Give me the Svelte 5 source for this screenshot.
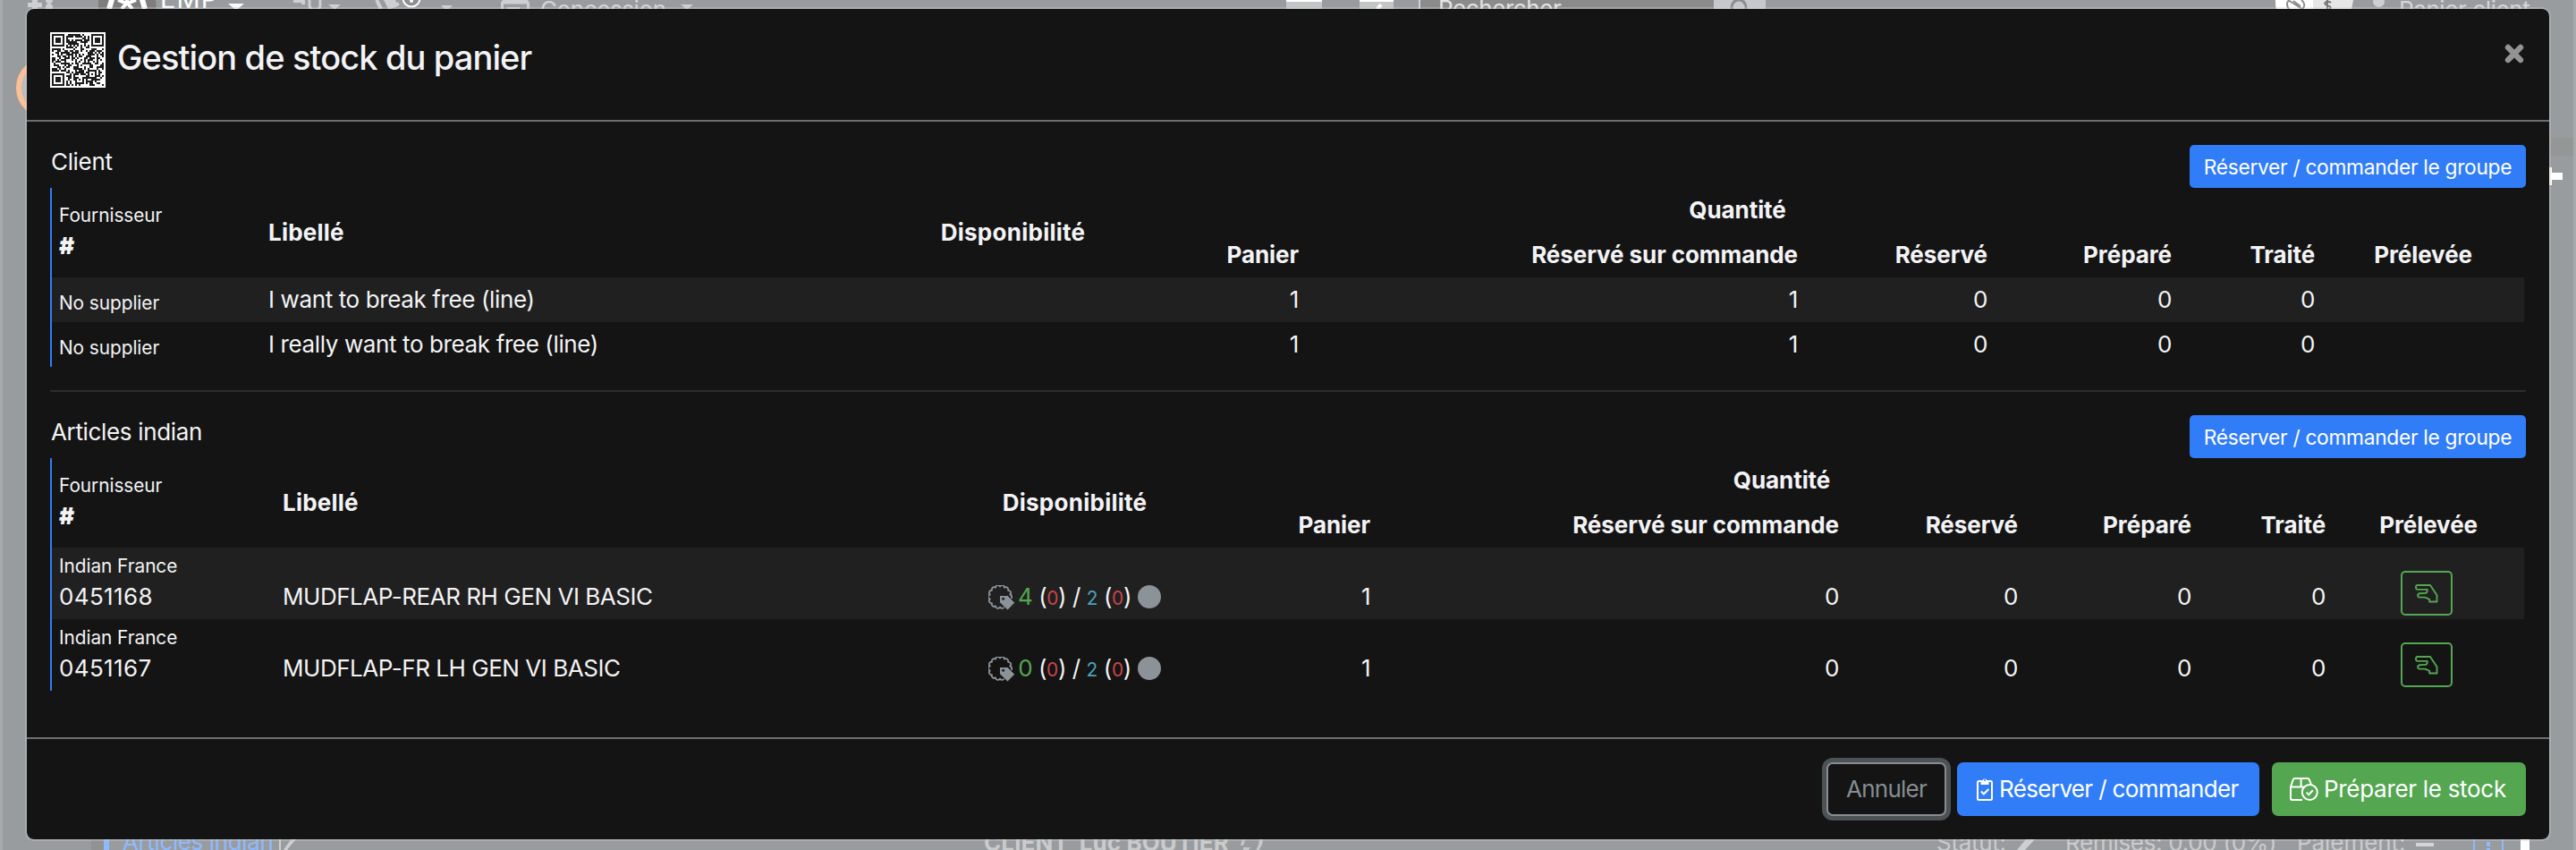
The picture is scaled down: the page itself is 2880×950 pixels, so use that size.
<script>
  const groups = [
    {
      title: 'Client',
      cols: [234, 684, 313, 171, 558, 212, 206, 160, 226],
      rows: [
        { supplier: 'No supplier', label: 'I want to break free (line)', qty: [1, 1, 0, 0, 0] },
        { supplier: 'No supplier', label: 'I really want to break free (line)', qty: [1, 1, 0, 0, 0] }
      ]
    },
    {
      title: 'Articles indian',
      cols: [250, 719, 349, 164, 524, 200, 194, 150, 214],
      rows: [
        { supplier: 'Indian France', ref: '0451168', label: 'MUDFLAP-REAR RH GEN VI BASIC', stock: 4, qty: [1, 0, 0, 0, 0] },
        { supplier: 'Indian France', ref: '0451167', label: 'MUDFLAP-FR LH GEN VI BASIC', stock: 0, qty: [1, 0, 0, 0, 0] }
      ]
    }
  ];
  const qtyHeads = ['Panier', 'Réservé sur commande', 'Réservé', 'Préparé', 'Traité'];

  // 29-module QR pattern
  function qrPath() {
    const n = 29;
    let seed = 20117;
    const rnd = () => ((seed = (seed * 1103515245 + 12345) & 0x7fffffff) >> 8) / 0x7fffff;
    const finder = (x, y) => {
      for (const [a, b] of [[0, 0], [n - 7, 0], [0, n - 7]]) {
        const dx = x - a, dy = y - b;
        if (dx >= -1 && dx <= 7 && dy >= -1 && dy <= 7) {
          const r = Math.max(Math.abs(dx - 3), Math.abs(dy - 3));
          return r === 3 || r <= 1;
        }
      }
      const r = Math.max(Math.abs(x - 22), Math.abs(y - 22));
      if (r <= 2) return r !== 1;
      if (y === 6) return x % 2 === 0;
      if (x === 6) return y % 2 === 0;
      return null;
    };
    let d = '';
    for (let y = 0; y < n; y++)
      for (let x = 0; x < n; x++) {
        const v = rnd() < 0.54;
        const f = finder(x, y);
        if (f === null ? v : f) d += `M${x} ${y}h1v1h-1z`;
      }
    return d;
  }

  // scalloped badge outline
  function scallop(cx, cy, r, lobes) {
    let d = '';
    for (let i = 0; i <= lobes; i++) {
      const a = ((i - 0.5) / lobes) * Math.PI * 2;
      const x = (cx + r * Math.cos(a)).toFixed(2), y = (cy + r * Math.sin(a)).toFixed(2);
      d += i ? `A2.4 2.4 0 0 1 ${x} ${y}` : `M${x} ${y}`;
    }
    return d + 'z';
  }
  const badge = scallop(13, 13, 11, 14);
  const qr = qrPath();

  const topItems = [
    [31, 'puzzle'], [110, 'logo'], [179, 'emp'], [255, 'caretw'], [328, 'tool'], [367, 'caret'], [418, 'book'], [493, 'caretlow'],
    [560, 'calendar'], [603, 'Concession'], [761, 'caret'], [1438, 'key'], [1518, 'keyslash'], [1586, 'search'], [1916, 'loupe'],
    [2544, 'toggle'], [2653, 'person'], [2681, 'Panier client'], [2880, '']
  ];
  const width = (list, i) => list[i + 1][0] - list[i][0];
</script>

{#snippet icon(kind)}
  {#if kind === 'puzzle'}
    <svg width="32" height="10" fill="#cdcfd1"><path d="M5 0h6v3h5v5h-5v2H5V8H0V3h5z" /><circle cx="24" cy="0" r="4" /><circle cx="24" cy="8" r="4" /></svg>
  {:else if kind === 'logo'}
    <svg width="66" height="10"><path d="M3-6C-1 0-1 5 0 10h64c1-5 1-10-3-16z" fill="#807d7c" /><g stroke="#fff" fill="none" stroke-width="5"><path d="M16-4l-2 7-2 7M48-4l2 7 2 7" stroke-width="6" /><path d="M32 0v4M22 0l10 4 10-4M32 3l-6 7M32 3l6 7" stroke-width="4" /></g></svg>
  {:else if kind === 'caretw'}
    <svg width="18" height="10"><path d="M0 4h18l-7 6H7z" fill="#f8f8f8" /></svg>
  {:else if kind === 'caret'}
    <svg width="14" height="10"><path d="M0 5h14l-6 5H6z" fill="#cdcfd1" /></svg>
  {:else if kind === 'caretlow'}
    <svg width="13" height="10"><path d="M0 6h13l-4 4H4z" fill="#cdcfd1" /></svg>
  {:else if kind === 'tool'}
    <svg width="34" height="10"><path d="M0 0h13v5H9V3H0z" fill="#cdcfd1" /><path d="M18 0v5q0 6 6 6t6-6V0" stroke="#cdcfd1" stroke-width="3" fill="none" /></svg>
  {:else if kind === 'book'}
    <svg width="52" height="10"><path d="M3 0l5 10M14 0l4 8 10-4" stroke="#cdcfd1" stroke-width="4" fill="none" /><path d="M11 0l5 10 11-3-3-7z" fill="#cdcfd1" /><circle cx="42" cy="-2" r="9.5" fill="#8d8f90" stroke="#fff" stroke-width="2" /><circle cx="42" cy="1" r="2" fill="#fff" /></svg>
  {:else if kind === 'calendar'}
    <svg width="32" height="10"><path d="M1.5 10V4q0-3 4-3h21q4 0 4 3v6M1 3h30" stroke="#cdcfd1" stroke-width="3" fill="none" /><path d="M7 9h14" stroke="#cdcfd1" stroke-width="2" /></svg>
  {:else if kind === 'key'}
    <svg width="40" height="10"><path d="M0 0h40v10H0z" fill="#c3c5c7" /><path d="M0 0h40v2H0z" fill="#fff" /></svg>
  {:else if kind === 'keyslash'}
    <svg width="40" height="10"><path d="M2 0h38v10H2z" fill="#c3c5c7" /><path d="M2 0h38v2H2z" fill="#fff" /><path d="M26 5l-4 5" stroke="#fff" stroke-width="4" /></svg>
  {:else if kind === 'loupe'}
    <svg width="58" height="10"><path d="M0 0h58v10H0z" fill="#c5c9cc" /><ellipse cx="28" cy="8" rx="8" ry="8" fill="none" stroke="#8d8d8d" stroke-width="3" /></svg>
  {:else if kind === 'toggle'}
    <svg width="87" height="10"><path d="M0 0h87q-1 6-2 10H1Q0 6 0 0z" fill="#e6e6e6" /><path d="M0 0h42v10H1Q0 6 0 0z" fill="#fff" /><path d="M15 0q-4 5 0 10M29 0q6 5 1 10M14 0l16 10M20 1l8 6" stroke="#8d8d8d" stroke-width="2" fill="none" /><path d="M62 3q-2-2-5-1-4 2 1 4 6 2 2 4M58 0v10" stroke="#777" stroke-width="2" fill="none" /></svg>
  {:else if kind === 'person'}
    <svg width="13" height="10"><ellipse cx="6.5" cy="2" rx="6.5" ry="6" fill="#cdcfd1" /></svg>
  {/if}
{/snippet}

<div class="page">
  <div class="topbar">
    {#each topItems.slice(0, -1) as [x, kind], i}
      <div class="slot {kind}" style="width:{width(topItems, i)}px">
        {#if kind === 'emp'}EMP
        {:else if kind === 'search'}Rechercher
        {:else if kind[0] >= 'A' && kind[0] <= 'Z'}{kind}
        {:else}{@render icon(kind)}{/if}
      </div>
    {/each}
  </div>

  <div class="ring"></div>
  <svg class="behind" width="20" height="26" viewBox="0 0 20 26"><path d="M0 9h15v8H0zM0 3h3v20H0z" fill="#fff" /></svg>
  <div class="edge-tab"></div>

  <div class="bottombar">
    <div class="tab"><i></i><span>Articles indian</span>
      <svg width="26" height="24" fill="none" stroke="#cdcfd1" stroke-width="2"><path d="M4 0v24M24 8L12 22l-2 6M19 10L9 24" /></svg>
    </div>
    <div class="who">CLIENT_Luc BOUTIER
      <svg width="28" height="14" fill="#c5c8ca"><path d="M3 0l3 1-2 6H1zM4 9h8l-4 5H4zM22 0l4 0q0 7-6 14h-3q5-7 5-14z" /></svg>
    </div>
    <div class="statut">Statut:<svg width="24" height="24"><path d="M3 24L17 7l6 5-12 13z" fill="#cdcfd1" /></svg></div>
    <div class="remises">Remises: 0.00 (0%)</div>
    <div class="paiement">Paiement:<i></i></div>
    <div class="more"><i></i></div>
    <div class="scroll"></div>
  </div>

  <section class="modal">
    <header>
      <svg class="qr" width="62" height="62" viewBox="-1 -1 31 31" shape-rendering="crispEdges"><path d="M-1-1h31v31H-1z" fill="#fff" /><path d={qr} fill="#1c1c1c" /></svg>
      <h4>Gestion de stock du panier</h4>
      <svg class="close" width="22" height="22" viewBox="0 0 22 22"><path d="M4 4l14 14M18 4L4 18" stroke="#939393" stroke-width="6.4" stroke-linecap="round" /></svg>
    </header>

    <div class="body">
      {#each groups as g, gi}
        {#if gi}<hr />{/if}
        <div class="ghead">
          <span>{g.title}</span>
          <button class="group-btn">Réserver / commander le groupe</button>
        </div>
        <table>
          <colgroup>{#each g.cols as c}<col style="width:{c}px" />{/each}</colgroup>
          <thead>
            <tr>
              <th rowspan="2" class="sup"><small>Fournisseur</small><b>#</b></th>
              <th rowspan="2" class="lab">Libellé</th>
              <th rowspan="2" class="mid">Disponibilité</th>
              <th colspan="5" class="quant">Quantité</th>
              <th></th>
            </tr>
            <tr>
              {#each qtyHeads as h}<th class="num">{h}</th>{/each}
              <th class="ctr">Prélevée</th>
            </tr>
          </thead>
          <tbody>
            {#each g.rows as r}
              <tr class:tall={r.ref}>
                <td class="sup">
                  {#if r.ref}<small>{r.supplier}</small><span class="ref">{r.ref}</span>{:else}<small class="only">{r.supplier}</small>{/if}
                </td>
                <td class="label">{r.label}</td>
                <td class="ctr">
                  {#if r.ref}
                    <div class="stock">
                      <svg width="30" height="29" viewBox="0 0 30 29">
                        <path d={badge} fill="none" stroke="#8b9298" stroke-width="1.8" />
                        <path d="M12.5 11.5h9.2l8 8.2-8.2 8.4-9-8.8z" fill="#8b9298" stroke="var(--row)" stroke-width="1" />
                        <circle cx="16.6" cy="15.2" r="1.5" fill="#202020" />
                      </svg>
                      <span class="txt"><span class="g">{r.stock}</span> (<small class="r">0</small>) / <small class="c">2</small> (<small class="r">0</small>)</span>
                      <i class="dot"></i>
                    </div>
                  {/if}
                </td>
                {#each r.qty as q}<td class="num">{q}</td>{/each}
                <td class="pick">
                  {#if r.ref}
                    <button class="pick-btn" aria-label="Prélever">
                      <svg width="26" height="21" viewBox="0 0 26 21"><path d="M2.6 1H17l7.5 11.3v7.2H16.2v-2.6l-5-2.3H5.2C2.4 14.600 2.400 10.600 5.400 10.300l6.400-.4c1.400-.1 2-1.900 2-4H3C.4 5.900.4 1.200 2.600 1z" fill="none" stroke="#54a651" stroke-width="1.900" stroke-linejoin="round" /></svg>
                    </button>
                  {/if}
                </td>
              </tr>
            {/each}
          </tbody>
        </table>
      {/each}
    </div>

    <footer>
      <button class="cancel"><span>Annuler</span></button>
      <button class="reserve">
        <svg width="18" height="26" viewBox="0 0 18 26"><rect x="1" y="4" width="16" height="21" rx="1.500" fill="none" stroke="#fff" stroke-width="2" /><path d="M4.500 8V3.500H6.300a2.800 2.800 0 0 1 5.400 0h1.800V8z" fill="#fff" /><circle cx="9" cy="3" r="1" fill="#317df7" /><path d="M5 15.500l2.800 3L13.300 13" fill="none" stroke="#fff" stroke-width="2" /></svg>
        <span>Réserver / commander</span>
      </button>
      <button class="prepare">
        <svg width="32" height="26" viewBox="0 0 32 26" fill="none" stroke="#fff" stroke-width="2"><path d="M14 25H2.500Q1 25 1 23.500V10.500L3.800 2.200Q4.200 1 5.500 1H20q1.300 0 1.700 1.200L24 8M1 10.500h14.500M12.600 1v9.500" /><circle cx="22.300" cy="16.500" r="8.500" /><path d="M18.600 16.600l2.600 2.700 4.600-5" /></svg>
        <span>Préparer le stock</span>
      </button>
    </footer>
  </section>
</div>

<style>
  :global(body) { background: #999c9e; }
  .page { position: relative; width: 2880px; height: 950px; overflow: hidden; background: #999c9e; box-sizing: border-box; border-left: 3px solid #a7aaac; font-family: Inter, 'Liberation Sans', sans-serif; font-size: 26px; font-weight: 440; line-height: 39px; color: #f3f3f5; }
  .page::after { content: ''; position: absolute; right: 0; top: 0; width: 3px; height: 100%; background: #a7aaac; }
  .page * { box-sizing: border-box; }
  svg { display: block; flex: none; }
  button { font: inherit; color: #fff; border: 0; padding: 0; margin: 0; }

  .topbar { display: flex; height: 10px; padding-left: 28px; color: #d3d5d6; letter-spacing: -0.4px; white-space: nowrap; }
  .slot { flex: none; line-height: 39px; height: 10px; }
  .Concession, .Panier { margin-top: -9px; height: 20px; padding-left: 1px; }
  .emp { font-size: 29px; letter-spacing: 1px; margin-top: -21px; height: 30px; color: #fff; }
  .search { border-left: 2px solid #d0d3d5; background: #8b8b8b; padding-left: 20px; color: #e4e4e4; height: 49px; margin-top: -10px; }

  .ring { position: absolute; left: 15px; top: 64px; width: 68px; height: 68px; border-radius: 50%; border: 6px solid #fbc096; background: #b9bcbd; }
  .behind { position: absolute; left: 2847px; top: 184px; }
  .edge-tab { position: absolute; left: 2849px; top: 154px; width: 25px; height: 20px; background: #959696; }

  .bottombar { position: absolute; left: 0; bottom: 0; width: 2877px; height: 30px; display: flex; color: #c9cbcd; white-space: nowrap; letter-spacing: -0.3px; line-height: 42px; }
  .tab { display: flex; width: 1097px; padding-left: 99px; color: #8dbaff; letter-spacing: -0.38px; }
  .tab i { width: 20px; margin-right: 15px; border-left: 14px solid #929292; background: #8dbaff; }
  .tab svg { margin: 6px 0 0 4px; }
  .who { display: flex; width: 1065px; font-weight: 700; letter-spacing: 0.1px; line-height: 43px; }
  .who svg { margin: 18px 0 0 12px; }
  .statut { display: flex; width: 144px; line-height: 43px; }
  .statut svg { margin: 6px 0 0 9px; }
  .remises { width: 259px; line-height: 43px; }
  .paiement { display: flex; width: 197px; line-height: 43px; letter-spacing: -0.06px; }
  .paiement i { width: 20px; height: 4px; margin: 22px 0 0 12px; background: #d3d5d6; }
  .more { width: 34px; height: 30px; border: 2px solid #8dbaff; border-width: 0 2px; }
  .more i { display: block; width: 4px; height: 5px; margin: 21px auto 0; background: #8dbaff; box-shadow: 0 7px #8dbaff; }
  .scroll { width: 10px; margin-left: 19px; background: #fff; }

  .modal { position: absolute; left: 25px; top: 8px; width: 2824px; height: 932px; border: 2px solid rgba(200, 205, 200, 0.35); border-radius: 10px; background: #141414 padding-box; display: flex; flex-direction: column; }
  header { display: flex; height: 126px; padding: 26px 26px 0; border-bottom: 2px solid #6b7073; }
  h4 { margin: 5px 0 0 13px; font-size: 38px; line-height: 46px; font-weight: 540; letter-spacing: -0.88px; }
  .close { margin: 13px 2px 0 auto; }
  .body { padding: 26px; height: 690px; border-bottom: 2px solid #6b7073; }
  .ghead { display: flex; justify-content: space-between; height: 48px; letter-spacing: -0.34px; }
  .ghead span { line-height: 38px; padding-left: 1px; }
  .group-btn { width: 376px; height: 48px; border-radius: 5px; background: #317df7; font-size: 22.75px; letter-spacing: -0.3px; }
  hr { margin: 26px 0; border: 0; height: 2px; background: #2c2c2d; }

  table { table-layout: fixed; width: 2766px; border-collapse: separate; border-spacing: 0; border-left: 2px solid #317df7; }
  th { height: 50px; padding: 5px 8px 6px; font-weight: 700; text-align: center; vertical-align: bottom; white-space: nowrap; letter-spacing: -0.08px; }
  td { height: 50px; padding: 5px 8px 6px; vertical-align: bottom; white-space: nowrap; letter-spacing: -0.38px; }
  .tall td { height: 80px; letter-spacing: -0.46px; }
  tbody tr { --row: #141414; }
  tbody tr:nth-child(odd) { background: #202020; --row: #202020; }
  .lab { text-align: left; vertical-align: middle; padding-bottom: 7px; letter-spacing: 0.2px; }
  .mid { vertical-align: middle; padding-bottom: 7px; letter-spacing: 0.27px; }
  .ctr { text-align: center; }
  .num { text-align: right; }
  small { font-size: 20.8px; letter-spacing: 0; font-weight: 440; }
  .sup { text-align: left; }
  .sup small { display: block; line-height: 29px; letter-spacing: -0.05px; }
  th.sup { padding-bottom: 16px; }
  th.sup small { line-height: 28px; }
  th.sup b { display: block; }
  .sup small.only { line-height: 31px; }
  .tall .ref { display: block; letter-spacing: 0.36px; }
  .stock { display: flex; justify-content: center; height: 39px; }
  .stock > svg { margin: 7px 3px 0 0; }
  .stock small { letter-spacing: -0.2px; }
  .g { color: #54a651; }
  .r { color: #cd444a; }
  .c { color: #4aa3bb; }
  .dot { width: 26px; height: 26px; margin: 7px 0 0 7px; border-radius: 50%; background: #8b9298; }
  td.pick { padding: 0 0 4px 76px; }
  .pick-btn { display: flex; width: 58px; height: 50px; align-items: center; justify-content: center; border: 2px solid #54a651; border-radius: 5px; background: none; }

  footer { display: flex; justify-content: flex-end; padding: 26px; }
  footer button { display: flex; height: 60px; align-items: center; border-radius: 7px; }
  footer span { padding-bottom: 2px; }
  .cancel { width: 134px; margin-right: 12px; justify-content: center; border: 2px solid #868d93; background: #141414; color: #868d93; letter-spacing: -0.75px; box-shadow: 0 0 0 5px #4d5255; }
  .reserve { width: 338px; margin-right: 14px; padding-left: 22px; gap: 7px; background: #317df7; letter-spacing: -0.64px; }
  .prepare { width: 284px; padding-left: 20px; gap: 6px; background: #54a651; letter-spacing: -0.3px; }
</style>
